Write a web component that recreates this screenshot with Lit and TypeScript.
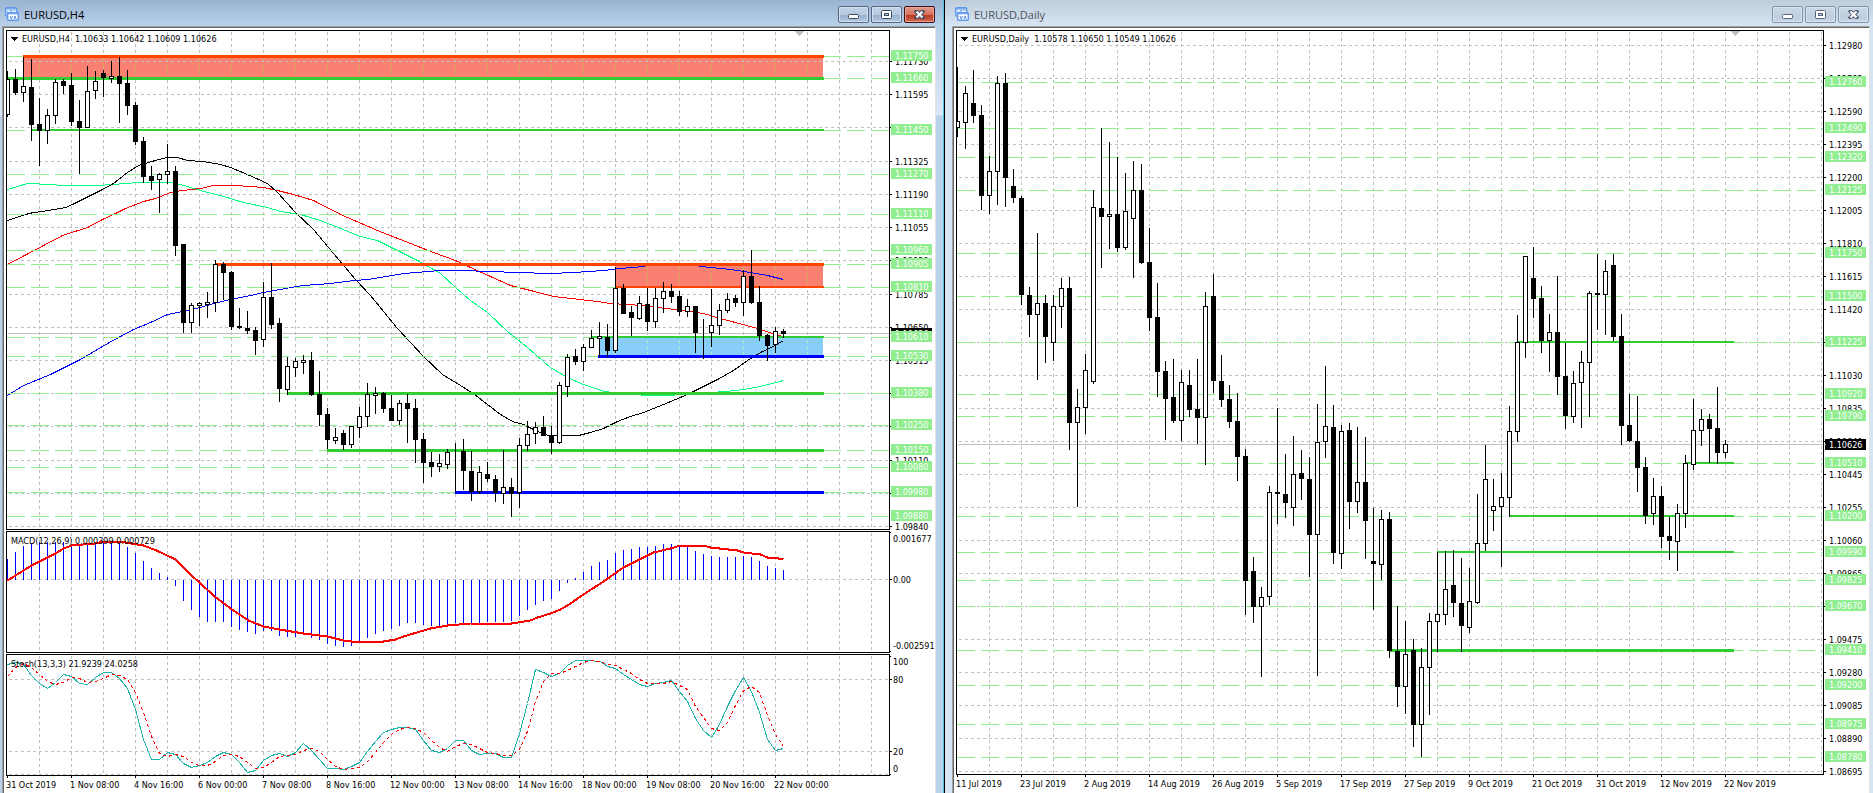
import { LitElement, html, svg, css } from "lit";
import { customElement, property } from "lit/decorators.js";

type Candle = [number, number, number, number, 0 | 1];
type Level = [number, string];
interface Segment { y: number; x: number; w: 2 | 3; color: string }
interface Zone { x: number; y: number; h: number; color: string; grid: string }
interface Curve { color: string; points: string }
interface ChartData {
  title: string;
  quote: string;
  x0: number;
  rightEnd: number;
  marker: number;
  vgrid: number;
  prices: Level[];
  levels: Level[];
  current: [number, string];
  candles: Candle[];
  segments: Segment[];
  zones: Zone[];
  curves: Curve[];
  times: string[];
}

const LIME = "#32cd32";
const ORANGE = "#ff4500";
const BLUE = "#0000ff";

/* high, body top, body bottom, low, hollow */
const h4Candles: Candle[] = [
  [71,79,114,116,1],[69,79,92,94,0],[57,86,92,101,1],[59,87,124,140,0],[98,124,130,165,0],
  [109,115,130,143,1],[79,82,115,123,1],[79,81,85,93,0],[73,85,121,125,0],[100,121,127,173,0],
  [66,91,127,127,1],[71,81,90,98,1],[70,73,77,96,0],[61,76,78,82,1],[57,76,83,122,0],
  [70,83,105,114,0],[102,105,141,144,0],[137,141,176,182,0],[166,176,180,189,0],[173,174,179,212,1],
  [144,171,174,183,1],[166,171,245,255,0],[244,244,322,332,0],[303,305,322,332,1],[302,303,305,325,1],
  [292,302,304,317,1],[260,264,302,311,1],[262,264,272,299,0],[271,272,326,329,0],[308,326,327,328,0],
  [311,328,330,333,0],[327,330,340,354,0],[282,297,339,346,1],[263,297,324,328,0],[318,323,388,401,0],
  [357,366,389,394,1],[358,361,367,376,1],[355,360,362,373,1],[352,360,394,395,0],[371,394,414,425,0],
  [408,414,439,448,0],[428,437,440,443,1],[430,433,444,449,0],[426,426,444,447,1],[407,416,427,437,1],
  [383,394,416,426,1],[387,393,395,413,1],[392,393,408,412,0],[395,408,420,420,0],[400,403,420,424,1],
  [394,403,408,442,0],[399,408,439,462,0],[433,439,462,482,0],[452,462,466,476,0],[454,463,466,471,1],
  [449,452,464,468,1],[443,451,451,491,0],[439,451,470,489,0],[451,471,491,500,0],[466,472,491,493,1],
  [462,474,478,481,0],[475,479,492,501,0],[450,487,493,503,1],[478,487,493,516,0],[438,445,492,507,1],
  [421,434,445,450,1],[422,427,433,443,1],[416,427,435,435,0],[426,435,442,453,0],[382,385,442,443,1],
  [354,357,386,396,1],[349,356,361,364,0],[344,347,361,370,1],[330,338,347,347,1],[322,336,338,356,1],
  [324,337,350,356,0],[267,288,350,352,1],[284,288,313,313,0],[306,312,317,335,0],[296,303,318,319,1],
  [288,304,321,330,0],[288,298,321,327,1],[282,291,298,312,1],[284,291,296,302,0],[291,296,311,315,0],
  [299,306,311,316,1],[306,306,332,352,0],[319,332,332,358,0],[289,325,332,346,1],[304,310,325,334,1],
  [293,299,310,312,1],[295,298,302,306,0],[270,276,302,315,1],[250,276,302,303,0],[286,302,335,340,0],
  [334,335,345,360,0],[327,331,344,352,1],[329,331,333,337,0],
];

const dailyCandles: Candle[] = [
  [67,121,127,136,1],[86,93,122,148,1],[70,103,115,122,0],[105,115,195,209,0],[156,171,195,213,1],
  [76,83,171,204,1],[73,83,177,206,0],[169,186,197,202,0],[196,198,294,304,0],[287,295,314,336,0],
  [233,303,314,379,1],[295,303,336,362,0],[295,306,342,360,1],[278,288,306,327,1],[277,288,422,449,0],
  [389,407,422,506,1],[354,370,407,433,1],[190,207,381,383,1],[128,208,216,267,0],[142,214,216,248,1],
  [157,214,247,251,0],[173,211,247,249,1],[161,190,218,277,1],[164,190,262,263,0],[228,262,317,330,0],
  [283,317,371,396,0],[361,371,398,439,0],[359,397,420,422,0],[370,382,420,440,1],[370,385,409,416,0],
  [359,409,417,443,0],[292,306,417,464,1],[274,296,380,392,0],[355,381,399,406,0],[385,399,421,427,0],
  [393,421,456,480,0],[449,456,580,614,0],[557,571,606,622,0],[587,597,606,676,1],[486,492,596,604,1],
  [408,492,493,523,0],[454,494,502,517,0],[436,474,507,525,1],[450,473,478,499,0],[457,479,534,576,0],
  [404,442,534,675,1],[366,426,441,457,1],[405,427,552,563,0],[425,431,553,568,1],[423,430,501,528,0],
  [427,482,501,512,1],[437,482,520,558,0],[508,561,563,609,0],[510,519,564,579,1],[512,519,650,657,0],
  [606,651,686,706,0],[621,654,686,713,1],[639,650,724,746,0],[648,667,724,756,1],[613,621,667,714,1],
  [552,614,621,651,1],[551,589,614,624,1],[550,585,602,616,0],[558,603,625,651,0],[568,601,627,632,1],
  [494,543,602,603,1],[445,479,543,550,1],[479,506,510,530,1],[473,497,506,566,1],[406,431,497,516,1],
  [315,342,431,441,1],[256,256,342,357,1],[247,278,298,317,0],[286,298,340,352,0],[314,332,340,371,1],
  [276,332,376,394,0],[343,376,415,428,0],[371,383,416,422,1],[351,362,382,427,1],[291,293,362,416,1],
  [254,293,294,329,0],[260,271,294,334,1],[254,265,336,340,0],[314,336,425,444,0],[394,425,440,441,0],
  [396,441,467,491,0],[457,467,515,523,0],[478,496,513,524,1],[486,496,536,547,0],[517,536,540,559,0],
  [504,513,541,570,1],[455,463,513,527,1],[399,430,464,469,1],[409,419,430,445,1],[414,419,428,462,0],
  [387,428,452,463,0],[440,444,452,457,1],
];

const h4: ChartData = {
  title: "EURUSD,H4",
  quote: "1.10633 1.10642 1.10609 1.10626",
  x0: 7, rightEnd: 824, marker: 799, vgrid: 39,
  prices: [
    [61,"1.11730"],[94,"1.11595"],[127,"1.11460"],[161,"1.11325"],[194,"1.11190"],[227,"1.11055"],
    [260,"1.10920"],[294,"1.10785"],[327,"1.10650"],[360,"1.10515"],[393,"1.10380"],[426,"1.10245"],
    [460,"1.10110"],[493,"1.09975"],[526,"1.09840"],
  ],
  levels: [
    [56,"1.11750"],[78,"1.11660"],[130,"1.11450"],[174,"1.11270"],[214,"1.11110"],[250,"1.10960"],
    [264,"1.10905"],[287,"1.10810"],[337,"1.10610"],[356,"1.10530"],[393,"1.10380"],[425,"1.10250"],
    [450,"1.10150"],[467,"1.10080"],[492,"1.09980"],[516,"1.09880"],
  ],
  current: [333, "1.10626"],
  candles: h4Candles,
  segments: [
    { y: 56, x: 23, w: 3, color: ORANGE },
    { y: 78, x: 7, w: 3, color: LIME },
    { y: 130, x: 31, w: 2, color: LIME },
    { y: 264, x: 215, w: 3, color: ORANGE },
    { y: 287, x: 615, w: 2, color: ORANGE },
    { y: 337, x: 591, w: 2, color: LIME },
    { y: 356, x: 598, w: 3, color: BLUE },
    { y: 393, x: 287, w: 3, color: LIME },
    { y: 450, x: 327, w: 3, color: LIME },
    { y: 492, x: 455, w: 3, color: BLUE },
  ],
  zones: [
    { x: 23, y: 56, h: 22, color: "#fa8072", grid: "#c8b45a" },
    { x: 615, y: 264, h: 23, color: "#fa8072", grid: "#c8b45a" },
    { x: 599, y: 337, h: 19, color: "#87cefa", grid: "#b4e8c0" },
  ],
  curves: [
    { color: "#00ff7f", points: "7,189 27,183 50,184 63,185 98,185 125,183 138,182 172,182 187,186 200,190 223,196 243,202 267,207 280,211 300,214 320,220 340,228 360,236 377,240 395,249 417,260 433,269 440,273 455,287 470,300 487,312 507,331 527,347 550,367 567,377 583,384 604,391 628,394 652,395 667,395 683,394 725,391 743,389 760,386 783,380" },
    { color: "#ff0000", points: "7,264 62,235 87,227 102,219 115,213 125,208 143,201 155,198 170,192 182,190 200,188 213,185 235,185 263,187 277,190 293,194 313,200 340,214 377,230 410,243 433,252 455,260 470,267 490,276 510,285 530,290 553,296 597,301 610,303 643,305 657,307 683,310 703,313 720,318 757,328 772,333 782,336" },
    { color: BLUE, points: "7,395 23,385 50,374 80,359 107,343 133,329 150,322 167,314 187,310 200,307 213,303 230,299 250,295 263,292 285,288 303,285 330,283 353,280 368,279 403,273 440,270 460,270 490,271 517,272 550,273 573,272 603,270 620,268 643,266 650,264 695,264 700,266 730,269 750,272 767,275 783,279" },
    { color: "#000000", points: "7,220 25,214 33,212 42,211 65,207 72,204 100,190 113,183 127,172 138,165 158,159 167,157 177,157 187,160 202,161 220,164 230,167 247,174 258,179 267,183 277,192 295,212 313,229 333,253 355,279 370,295 397,328 423,356 442,374 460,385 474,394 487,404 500,414 512,421 523,424 537,431 548,435 578,435 590,432 603,428 617,421 630,416 643,412 663,404 680,397 693,391 717,379 733,370 747,360 760,352 773,346 783,340" },
  ],
  times: ["31 Oct 2019","1 Nov 08:00","4 Nov 16:00","6 Nov 00:00","7 Nov 08:00","8 Nov 16:00","12 Nov 00:00","13 Nov 08:00","14 Nov 16:00","18 Nov 00:00","19 Nov 08:00","20 Nov 16:00","22 Nov 00:00"],
};

const daily: ChartData = {
  title: "EURUSD,Daily",
  quote: "1.10578 1.10650 1.10549 1.10626",
  x0: 957, rightEnd: 1734, marker: 1735, vgrid: 989,
  prices: [
    [45,"1.12980"],[78,"1.12785"],[111,"1.12590"],[144,"1.12395"],[177,"1.12200"],[210,"1.12005"],
    [243,"1.11810"],[276,"1.11615"],[309,"1.11420"],[342,"1.11225"],[375,"1.11030"],[408,"1.10835"],
    [441,"1.10640"],[474,"1.10445"],[507,"1.10255"],[540,"1.10060"],[573,"1.09865"],[606,"1.09670"],
    [639,"1.09475"],[672,"1.09280"],[705,"1.09085"],[738,"1.08890"],[771,"1.08695"],
  ],
  levels: [
    [82,"1.12760"],[128,"1.12490"],[157,"1.12320"],[190,"1.12125"],[253,"1.11750"],[296,"1.11500"],
    [342,"1.11225"],[394,"1.10920"],[416,"1.10790"],[463,"1.10510"],[516,"1.10200"],[552,"1.09990"],
    [580,"1.09825"],[606,"1.09670"],[650,"1.09410"],[685,"1.09200"],[724,"1.08975"],[757,"1.08780"],
  ],
  current: [444, "1.10626"],
  candles: dailyCandles,
  segments: [
    { y: 342, x: 1517, w: 2, color: LIME },
    { y: 463, x: 1685, w: 2, color: LIME },
    { y: 516, x: 1509, w: 2, color: LIME },
    { y: 552, x: 1437, w: 2, color: LIME },
    { y: 650, x: 1389, w: 3, color: LIME },
  ],
  zones: [],
  curves: [],
  times: ["11 Jul 2019","23 Jul 2019","2 Aug 2019","14 Aug 2019","26 Aug 2019","5 Sep 2019","17 Sep 2019","27 Sep 2019","9 Oct 2019","21 Oct 2019","31 Oct 2019","12 Nov 2019","22 Nov 2019"],
};

const macdBars = [
  558,551,545,543,541,541,541,541,543,543,542,541,541,541,542,546,552,560,567,572,576,
  585,600,609,616,621,621,621,626,629,631,633,630,630,635,636,636,634,637,639,643,645,646,645,641,637,633,630,628,
  625,622,622,624,625,626,625,622,622,623,622,621,621,621,620,615,609,604,600,598,590,582,
  577,571,565,561,559,552,549,548,546,546,545,543,543,545,546,550,553,555,556,556,556,555,556,560,565,567,569,
];
const macdSignal = "7,580 31,565 39,561 55,553 63,548 71,545 95,543 103,541 119,541 143,545 156,550 175,559 191,575 199,582 213,595 230,608 248,620 263,626 279,629 303,633 327,636 343,640 351,641 383,641 395,639 403,636 430,628 447,625 470,623 511,623 530,620 537,617 550,613 560,609 567,605 583,594 603,581 623,567 637,560 653,552 670,548 680,545 703,545 710,547 737,550 743,552 760,554 767,557 773,557 783,559";
const stochMain = "7,664 15,662 23,664 31,675 39,683 47,688 55,682 63,674 71,676 79,683 87,684 95,677 103,672 111,672 119,678 127,688 135,709 143,739 151,759 159,759 167,752 175,754 183,763 191,767 199,765 207,762 215,756 223,752 231,754 239,762 247,772 255,770 263,760 271,755 279,753 287,756 295,752 303,743 311,750 319,759 327,768 335,768 343,769 351,766 359,762 367,751 375,741 383,732 391,729 399,727 407,727 415,729 423,740 431,750 439,752 447,748 455,740 463,740 471,750 479,754 487,753 495,753 503,757 511,757 519,733 527,703 535,669 543,672 551,676 559,673 567,665 575,660 587,660 600,661 607,666 615,668 623,674 631,679 639,684 647,686 655,683 663,682 671,680 679,691 687,701 695,718 703,730 711,737 719,724 727,706 735,690 743,677 751,691 759,712 767,739 775,750 783,748";
const stochSignal = "7,676 15,667 23,663 31,667 39,674 47,681 55,684 63,682 71,677 79,678 87,682 95,681 103,678 111,674 119,675 127,679 135,692 143,712 151,736 159,753 167,756 175,754 183,756 191,762 199,765 207,765 215,761 223,755 231,754 239,756 247,762 255,768 263,767 271,762 279,756 287,755 295,754 303,750 311,748 319,751 327,759 335,766 343,769 359,767 367,761 375,752 383,742 391,734 399,729 407,727 415,728 423,732 431,740 439,747 447,751 455,746 463,743 471,744 479,748 487,752 495,753 503,755 511,755 519,749 527,731 535,701 543,681 551,673 559,673 567,670 575,666 583,662 591,660 600,661 607,664 615,665 623,669 631,673 639,679 647,683 663,683 671,681 679,685 687,689 695,706 703,717 711,728 719,730 727,722 735,705 743,690 751,686 759,692 767,715 775,734 783,746";

const range = (n: number) => Array.from({ length: n }, (_, i) => i);

@customElement("chart-window")
export class ChartWindow extends LitElement {
  @property({ attribute: false }) data: ChartData = h4;
  @property({ type: Boolean, reflect: true }) active = false;
  @property({ type: Boolean }) indicators = false;

  static styles = css`
    :host {
      display: flex;
      flex-direction: column;
      min-width: 0;
      overflow: hidden;
      background: linear-gradient(#bfcddb, #d7e4f2 26px, #d7e4f2);
      color: #4c535c;
    }
    :host([active]) {
      background: linear-gradient(#99b4d1, #b9d1ea 26px, #dce7f5 115px, #b9d1ea 116px);
      color: #000;
    }
    header {
      display: flex;
      align-items: center;
      gap: 5px;
      height: 26px;
      flex: none;
      padding: 3px 4px 0 10px;
      box-sizing: border-box;
    }
    :host([active]) header { padding: 3px 8px 0 5px; }
    h2 {
      margin: 0;
      flex: 1;
      font: 400 11px/15px "Open Sans", "Noto Sans", sans-serif;
    }
    .controls { display: flex; gap: 2px; }
    button {
      width: 31px;
      height: 17px;
      padding: 0;
      display: grid;
      place-items: center;
      border: 1px solid #8393ad;
      border-radius: 2px;
      background: linear-gradient(#cbd8e6, #c3d1e1 50%, #bccbdd 51%, #c8d6e6);
      box-shadow: inset 0 0 0 1px #d9e4f0;
    }
    :host([active]) button {
      border-color: #56677f;
      background: linear-gradient(#c3d4e7, #b5c9df 50%, #98b0cc 51%, #b3cae3);
      box-shadow: inset 0 0 0 1px #d3e1f0;
    }
    :host([active]) .close {
      border-color: #43101a;
      background: linear-gradient(#e39c8c, #d4705d 50%, #b93720 51%, #cf6a4f);
      box-shadow: inset 0 0 0 1px #e8a697;
    }
    .minimize { padding-top: 4px; }
    .client {
      flex: 1;
      min-height: 0;
      display: flex;
      flex-direction: column;
      gap: 1px;
      margin: 0 3px 0 7px;
      padding: 3px 0 0 3px;
      border: solid;
      border-width: 1px 1px 0 1px;
      border-color: #a0a0a0 #e3e3e3 #fff #a0a0a0;
      box-shadow: inset 1px 1px 0 #696969;
      background: #fff;
    }
    :host([active]) .client { margin: 0 7px 0 2px; }
    .pane { display: flex; min-height: 0; flex: 122 1 0; }
    .price { flex-grow: 500; }
    .solo { flex-grow: 745; }
    .plot {
      flex: 1;
      min-width: 0;
      box-sizing: border-box;
      height: 100%;
      border: 1px solid #000;
    }
    .scale { width: 45px; height: 100%; flex: none; }
    .time { width: 100%; height: 17px; flex: none; margin-top: -1px; }
    .time.low { height: 18px; }
    text {
      font: 9px "DejaVu Sans Condensed", "DejaVu Sans", sans-serif;
      fill: #000;
    }
    .tag { fill: #fff; }
    .crisp { shape-rendering: crispEdges; }
    .grid line { stroke: #c0c0c0; stroke-dasharray: 3 3; }
  `;

  private grid(top: number, bottom: number, rows: number[]) {
    const d = this.data;
    return svg`<g class="grid">
      ${range(60).map((i) => svg`<line x1=${d.vgrid + i * 32} x2=${d.vgrid + i * 32} y1=${top} y2=${bottom}></line>`)}
      ${rows.map((y) => svg`<line x1=${d.x0 + 1} x2=${d.x0 + 3000} y1=${y} y2=${y}></line>`)}
    </g>`;
  }

  private pricePlot() {
    const d = this.data;
    const [now] = d.current;
    const zoneGrid = (z: Zone) =>
      range(26)
        .map((i) => d.vgrid + i * 32)
        .filter((x) => x > z.x && x < d.rightEnd)
        .map((x) => svg`<line x1=${x} x2=${x} y1=${z.y + 2} y2=${z.y + z.h - 1} stroke=${z.grid} stroke-dasharray="3 3"></line>`);
    return html`<svg class="plot" role="img" aria-label=${`${d.title} price chart`}>
      <g class="crisp" transform="translate(${0.5 - d.x0} -30.5)" fill="none" stroke-width="1">
        ${this.grid(31, 3000, [])}
        ${d.zones.map((z) => svg`<rect x=${z.x - 0.5} y=${z.y - 0.5} width=${d.rightEnd - z.x - 1} height=${z.h} fill=${z.color}></rect>${zoneGrid(z)}`)}
        ${this.grid(0, 0, d.prices.map(([y]) => y))}
        <line x1=${d.x0} x2=${d.x0 + 3000} y1=${now} y2=${now} stroke="#c0c0c0"></line>
        ${d.curves.map((c) => svg`<polyline points=${c.points} stroke=${c.color}></polyline>`)}
        ${d.levels.map(([y]) => svg`<line x1=${d.x0 - 0.5} x2=${d.x0 + 3000} y1=${y} y2=${y} stroke="#90ee90" stroke-dasharray="18 6"></line>`)}
        ${d.segments.map((s) => {
          const y = s.w === 2 ? s.y - 0.5 : s.y;
          return svg`<line x1=${s.x - 0.5} x2=${d.rightEnd - 0.5} y1=${y} y2=${y} stroke=${s.color} stroke-width=${s.w}></line>`;
        })}
        ${d.candles.map(([hi, top, bottom, lo, up], i) => {
          const x = d.x0 + i * 8;
          return svg`<line x1=${x} x2=${x} y1=${hi - 0.5} y2=${lo + 0.5} stroke="#000"></line>
            <rect x=${x - 2} y=${top} width="4" height=${bottom - top} stroke="#000" fill=${up ? "#fff" : "#000"}></rect>`;
        })}
        <path d="M${d.marker - 5} 30.5h10l-5 5z" fill="#c0c0c0"></path>
        <path d="M${d.x0 + 2.5} 36.5h8l-4 4z" fill="#000"></path>
      </g>
      <text x="15" y="11" xml:space="preserve">${d.title}  ${d.quote}</text>
    </svg>`;
  }

  private priceScale() {
    const d = this.data;
    const [now, label] = d.current;
    return html`<svg class="scale">
      <g class="crisp" transform="translate(0 -30)">
        ${d.prices.map(([y, t]) => svg`<rect width="2" height="1" y=${y}></rect><text x="5" y=${y + 4}>${t}</text>`)}
        <rect x="1" y=${now - 5} width="41" height="11"></rect>
        <rect y=${now} width="2" height="1" fill="#c0c0c0"></rect>
        <text class="tag" x="5" y=${now + 4}>${label}</text>
        ${d.levels.map(([y, t]) => svg`<rect x="1" y=${y - 6} width="41" height="11" fill="#90ee90"></rect><text class="tag" x="5" y=${y + 3}>${t}</text>`)}
      </g>
    </svg>`;
  }

  private macd() {
    return html`<div class="pane">
      <svg class="plot" role="img" aria-label="MACD">
        <g class="crisp" transform="translate(-6.5 -531.5)" fill="none">
          ${this.grid(532, 3000, [579])}
          ${macdBars.map((y, i) => svg`<line x1=${7 + i * 8} x2=${7 + i * 8} y1="579" y2=${y} stroke=${BLUE}></line>`)}
          <polyline points=${macdSignal} stroke="#f00" stroke-width="2"></polyline>
        </g>
        <text x="4" y="12">MACD(12,26,9) 0.000399 0.000729</text>
      </svg>
      <svg class="scale">
        <g class="crisp" transform="translate(0 -531)">
          <rect width="1" height="1" y="532"></rect><rect width="2" height="1" y="579"></rect><rect width="1" height="1" y="651"></rect>
          <text x="3" y="542">0.001677</text><text x="3" y="583">0.00</text><text x="3" y="649">-0.002591</text>
        </g>
      </svg>
    </div>`;
  }

  private stoch() {
    return html`<div class="pane">
      <svg class="plot" role="img" aria-label="Stochastic oscillator">
        <g class="crisp" transform="translate(-6.5 -654.5)" fill="none">
          ${this.grid(655, 3000, [679, 751, 774])}
          <polyline points=${stochMain} stroke="#20b2aa"></polyline>
          <polyline points=${stochSignal} stroke="#f00" stroke-dasharray="3 3"></polyline>
        </g>
        <text x="4" y="12">Stoch(13,3,3) 21.9239 24.0258</text>
      </svg>
      <svg class="scale">
        <g class="crisp" transform="translate(0 -654)">
          <rect width="1" height="1" y="656"></rect><rect width="2" height="1" y="679"></rect><rect width="2" height="1" y="751"></rect><rect width="1" height="1" y="774"></rect>
          <text x="3" y="665">100</text><text x="3" y="683">80</text><text x="3" y="755">20</text><text x="3" y="772">0</text>
        </g>
      </svg>
    </div>`;
  }

  render() {
    const d = this.data;
    const glyph = this.active ? "#3c4a63" : "#56637a";
    return html`
      <header>
        <svg width="14" height="15" aria-hidden="true">
          <rect x="0.7" y="0.7" width="11" height="8.300" rx="1" fill="#e4f0fd" stroke="#5f98e8" stroke-width="1.400"></rect>
          <path d="M1 2h10" stroke="#5f98e8"></path>
          <path d="M2.500 7V5l1.500 1M5.500 4.500V3.500h1v1M9 4v-1" fill="none" stroke="#5f98e8"></path>
          <rect x="2.700" y="5.700" width="10.600" height="7.600" rx="1" fill="#fff" stroke="#5f98e8" stroke-width="1.400"></rect>
          <path d="M3 6.800h10" stroke="#5f98e8"></path>
          <path d="M5 9l1.200 3 1.300-3M9 12l1-3 1.200 3" fill="none" stroke="#4a86d8" stroke-width="0.900"></path>
        </svg>
        <h2>${d.title}</h2>
        <div class="controls">
          <button class="minimize" aria-label="Minimize"><svg width="11" height="5"><rect x="0.5" y="0.5" width="10" height="4" rx="1" fill="#fff" stroke=${glyph}></rect></svg></button>
          <button aria-label="Restore"><svg width="11" height="9"><rect x="0.5" y="0.5" width="10" height="8" rx="1" fill="#fff" stroke=${glyph}></rect><rect x="3.5" y="3.5" width="4" height="2" fill="#b9cbe0" stroke=${glyph}></rect></svg></button>
          <button class="close" aria-label="Close"><svg width="11" height="9"><path d="M2.500 1.500l6 6M8.500 1.500l-6 6" stroke=${glyph} stroke-width="4" stroke-linecap="square"></path><path d="M2.500 1.500l6 6M8.500 1.500l-6 6" stroke="#fff" stroke-width="2.200"></path></svg></button>
        </div>
      </header>
      <div class="client">
        <div class="pane ${this.indicators ? "price" : "solo"}">${this.pricePlot()}${this.priceScale()}</div>
        ${this.indicators ? [this.macd(), this.stoch()] : ""}
        <svg class="time ${this.indicators ? "" : "low"}">
          ${d.times.map((t, i) => svg`<rect x=${1 + i * 64} width="1" height="2"></rect><text x=${i * 64} y="12">${t}</text>`)}
        </svg>
      </div>
    `;
  }
}

@customElement("app-root")
export class AppRoot extends LitElement {
  static styles = css`
    :host { display: flex; height: 100vh; overflow: hidden; }
    .first { flex: 943 1 0; }
    .second { flex: 928 1 0; }
    .edge { width: 1px; flex: none; background: #4fc3dc; border-right: 1px solid #000; }
  `;

  render() {
    return html`
      <chart-window class="first" active indicators .data=${h4}></chart-window>
      <div class="edge"></div>
      <chart-window class="second" .data=${daily}></chart-window>
    `;
  }
}
